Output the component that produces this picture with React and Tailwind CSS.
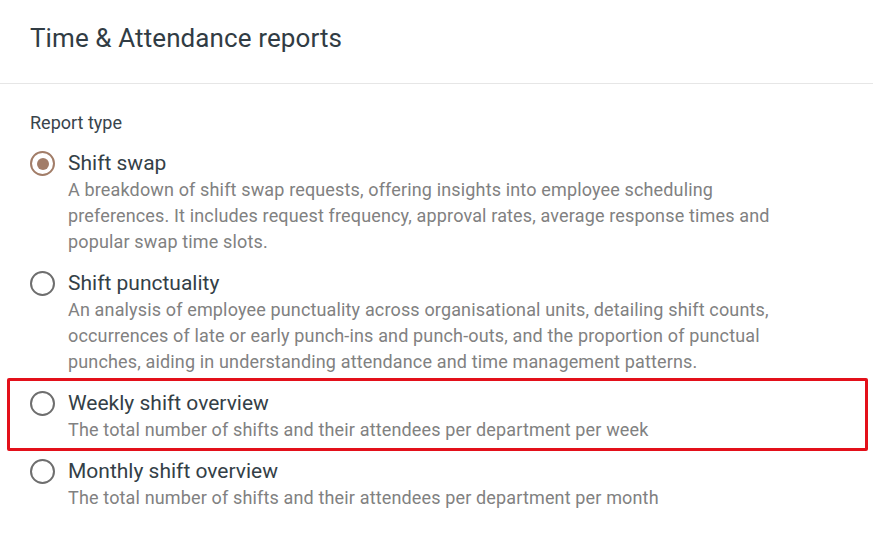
import React from "react";

const items = [
  {
    title: "Shift swap",
    desc: "A breakdown of shift swap requests, offering insights into employee scheduling preferences. It includes request frequency, approval rates, average response times and popular swap time slots.",
    checked: true,
  },
  {
    title: "Shift punctuality",
    desc: "An analysis of employee punctuality across organisational units, detailing shift counts, occurrences of late or early punch-ins and punch-outs, and the proportion of punctual punches, aiding in understanding attendance and time management patterns.",
  },
  {
    title: "Weekly shift overview",
    desc: "The total number of shifts and their attendees per department per week",
    highlight: true,
  },
  {
    title: "Monthly shift overview",
    desc: "The total number of shifts and their attendees per department per month",
  },
];

function Radio({ checked }) {
  return (
    <div
      className={
        "w-[25px] h-[25px] rounded-full border-[2.5px] flex items-center justify-center shrink-0 " +
        (checked ? "border-[#a27d68]" : "border-[#6e6e6e]")
      }
    >
      {checked && <div className="w-[12px] h-[12px] rounded-full bg-[#a27d68]" />}
    </div>
  );
}

export default function App() {
  return (
    <div
      className="w-[873px] h-[540px] bg-white overflow-hidden"
      style={{ fontFamily: "Roboto, 'Liberation Sans', sans-serif" }}
    >
      <div className="pl-[30px] pt-[22px] pb-[29px] border-b border-[#e6e6e6]">
        <h1 className="text-[26px] leading-[32px] tracking-[0.1px] text-[#313c44] font-normal">
          Time &amp; Attendance reports
        </h1>
      </div>
      <div className="pl-[30px] pt-[27px]">
        <div className="text-[18px] leading-[24px] text-[#39444c]">Report type</div>
        <div className="flex flex-col gap-[15px] mt-[15px]">
          {items.map((it) => (
            <div key={it.title} className="relative flex gap-[13px]">
              {it.highlight && (
                <div className="absolute left-[-23px] top-[-12px] w-[861px] h-[73px] border-[3px] border-[#e3101a] rounded-[2px] pointer-events-none" />
              )}
              <div className="pt-[1px]">
                <Radio checked={it.checked} />
              </div>
              <div className="flex flex-col">
                <div className="text-[21px] leading-[27px] text-[#343f47]">{it.title}</div>
                <div className="w-[730px] text-[18px] leading-[26px] tracking-[0.15px] text-[#818181]">{it.desc}</div>
              </div>
            </div>
          ))}
        </div>
      </div>
    </div>
  );
}
